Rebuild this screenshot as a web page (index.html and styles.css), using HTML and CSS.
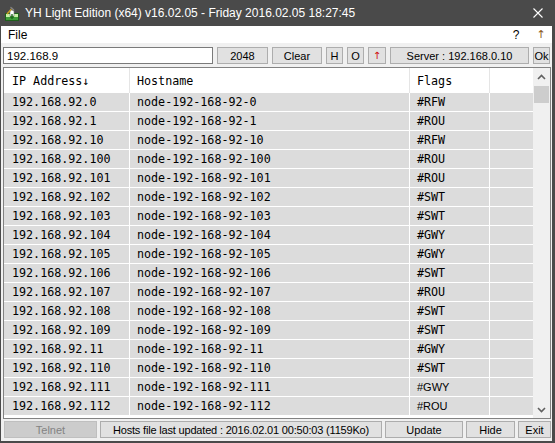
FILE: index.html
```html
<!DOCTYPE html>
<html>
<head>
<meta charset="utf-8">
<link rel="stylesheet" href="styles.css">
</head>
<body>
<div class="window">
  <div class="titlebar">
    <svg class="app-icon" viewBox="0 0 16 16" width="16" height="16">
      <rect x="1.5" y="8.5" width="13" height="7" fill="#3f9e3a" stroke="#1f5f1c"/>
      <rect x="2" y="9" width="12" height="3" fill="#c9f0a8"/>
      <rect x="6" y="5" width="4" height="6" fill="#ffffff" stroke="#7a7a7a" stroke-width="0.6"/>
      <path d="M8 9 V13 M6.3 11.5 L8 13.3 L9.7 11.5" stroke="#1d6b1a" stroke-width="1.3" fill="none"/>
      <path d="M3 9 L8.5 3" stroke="#c9a020" stroke-width="1.6"/>
      <path d="M7 1.5 L10.5 4.5 L9.3 5.8 L5.8 2.8 Z" fill="#8a8a8a" stroke="#444" stroke-width="0.5"/>
    </svg>
    <span class="title">YH Light Edition (x64) v16.02.05 - Friday 2016.02.05 18:27:45</span>
    <svg class="close" viewBox="0 0 10 10" width="10" height="10">
      <path d="M0.5 0.5 L9.5 9.5 M9.5 0.5 L0.5 9.5" stroke="#ffffff" stroke-width="1.1"/>
    </svg>
  </div>
  <div class="client">
    <div class="menubar">
      <span class="menu-item">File</span>
      <span class="spacer"></span>
      <span class="menu-icon">?</span>
      <span class="menu-icon arrow">↑</span>
    </div>
    <div class="toolbar">
      <input class="search" type="text" value="192.168.9">
      <div class="btn">2048</div>
      <div class="btn">Clear</div>
      <div class="btn">H</div>
      <div class="btn">O</div>
      <div class="btn red">↑</div>
      <div class="btn">Server : 192.168.0.10</div>
      <div class="btn">Ok</div>
    </div>
    <div class="list">
      <div class="table">
        <div class="row head">
          <div class="cell">IP Address↓</div>
          <div class="cell">Hostname</div>
          <div class="cell">Flags</div>
          <div class="cell last"></div>
        </div>
        <div class="row"><div class="cell">192.168.92.0</div><div class="cell">node-192-168-92-0</div><div class="cell">#RFW</div><div class="cell last"></div></div>
        <div class="row"><div class="cell">192.168.92.1</div><div class="cell">node-192-168-92-1</div><div class="cell">#ROU</div><div class="cell last"></div></div>
        <div class="row"><div class="cell">192.168.92.10</div><div class="cell">node-192-168-92-10</div><div class="cell">#RFW</div><div class="cell last"></div></div>
        <div class="row"><div class="cell">192.168.92.100</div><div class="cell">node-192-168-92-100</div><div class="cell">#ROU</div><div class="cell last"></div></div>
        <div class="row"><div class="cell">192.168.92.101</div><div class="cell">node-192-168-92-101</div><div class="cell">#ROU</div><div class="cell last"></div></div>
        <div class="row"><div class="cell">192.168.92.102</div><div class="cell">node-192-168-92-102</div><div class="cell">#SWT</div><div class="cell last"></div></div>
        <div class="row"><div class="cell">192.168.92.103</div><div class="cell">node-192-168-92-103</div><div class="cell">#SWT</div><div class="cell last"></div></div>
        <div class="row"><div class="cell">192.168.92.104</div><div class="cell">node-192-168-92-104</div><div class="cell">#GWY</div><div class="cell last"></div></div>
        <div class="row"><div class="cell">192.168.92.105</div><div class="cell">node-192-168-92-105</div><div class="cell">#GWY</div><div class="cell last"></div></div>
        <div class="row"><div class="cell">192.168.92.106</div><div class="cell">node-192-168-92-106</div><div class="cell">#SWT</div><div class="cell last"></div></div>
        <div class="row"><div class="cell">192.168.92.107</div><div class="cell">node-192-168-92-107</div><div class="cell">#ROU</div><div class="cell last"></div></div>
        <div class="row"><div class="cell">192.168.92.108</div><div class="cell">node-192-168-92-108</div><div class="cell">#SWT</div><div class="cell last"></div></div>
        <div class="row"><div class="cell">192.168.92.109</div><div class="cell">node-192-168-92-109</div><div class="cell">#SWT</div><div class="cell last"></div></div>
        <div class="row"><div class="cell">192.168.92.11</div><div class="cell">node-192-168-92-11</div><div class="cell">#GWY</div><div class="cell last"></div></div>
        <div class="row"><div class="cell">192.168.92.110</div><div class="cell">node-192-168-92-110</div><div class="cell">#SWT</div><div class="cell last"></div></div>
        <div class="row"><div class="cell">192.168.92.111</div><div class="cell">node-192-168-92-111</div><div class="cell sans">#GWY</div><div class="cell last"></div></div>
        <div class="row"><div class="cell">192.168.92.112</div><div class="cell">node-192-168-92-112</div><div class="cell sans">#ROU</div><div class="cell last"></div></div>
      </div>
      <div class="scrollbar">
        <div class="sb-btn">
          <svg viewBox="0 0 9 6" width="9" height="6"><path d="M1 5 L4.5 1.5 L8 5" stroke="#606060" stroke-width="1.6" fill="none"/></svg>
        </div>
        <div class="thumb"></div>
        <div class="sb-btn bottom">
          <svg viewBox="0 0 9 6" width="9" height="6"><path d="M1 1 L4.5 4.5 L8 1" stroke="#606060" stroke-width="1.6" fill="none"/></svg>
        </div>
      </div>
    </div>
    <div class="statusbar">
      <div class="btn disabled">Telnet</div>
      <div class="btn narrow">Hosts file last updated : 2016.02.01 00:50:03 (1159Ko)</div>
      <div class="btn">Update</div>
      <div class="btn">Hide</div>
      <div class="btn">Exit</div>
    </div>
  </div>
</div>
</body>
</html>
```
FILE: styles.css
```css
* { box-sizing: border-box; }
html, body { margin: 0; padding: 0; }
body {
  width: 555px;
  height: 443px;
  overflow: hidden;
  background: #4a4a4a;
  font-family: "Liberation Sans", Arial, sans-serif;
}
.window {
  width: 555px;
  height: 443px;
  display: flex;
  flex-direction: column;
}
.titlebar {
  height: 26px;
  flex: none;
  background: #4a4a4a;
  color: #ffffff;
  display: flex;
  align-items: center;
  padding-left: 4px;
  font-size: 12px;
}
.app-icon { flex: none; margin-right: 5px; margin-top: -1px; }
.title { flex: 1; white-space: nowrap; }
.close { flex: none; margin-right: 12px; }
.client {
  flex: 1;
  background: #f0f0f0;
  margin: 0 3px 2px 1px;
  display: flex;
  flex-direction: column;
}
.menubar {
  height: 17px;
  flex: none;
  background: #ffffff;
  display: flex;
  align-items: center;
  padding: 0 1px 0 7px;
  font-size: 12px;
  color: #000;
}
.spacer { flex: 1; }
.menu-icon { width: 20px; text-align: center; margin-left: 5px; }
.menu-icon.arrow { color: #8a5a20; font-family: "DejaVu Sans", sans-serif; font-size: 11px; }
.toolbar {
  margin-top: 4px;
  height: 17px;
  flex: none;
  padding-left: 2px;
  display: grid;
  grid-template-columns: 210px 51px 50px 17px 17px 18px 139px 17px;
  column-gap: 4px;
}
.search {
  margin: 0;
  height: 17px;
  border: 1px solid #7a7a7a;
  background: #fff;
  padding: 0 3px;
  font-family: "Liberation Sans", Arial, sans-serif;
  font-size: 11.5px;
  color: #000;
  outline: none;
}
.btn {
  background: #e1e1e1;
  border: 1px solid #adadad;
  display: flex;
  align-items: center;
  justify-content: center;
  font-size: 11px;
  color: #000;
  white-space: nowrap;
  overflow: hidden;
}
.btn.narrow { letter-spacing: -0.18px; }
.btn.red { color: #d01010; font-family: "DejaVu Sans", sans-serif; font-size: 10px; }
.btn.disabled { background: #cccccc; border-color: #bfbfbf; color: #838383; }
.list {
  margin: 3px 0 0 2px;
  width: 548px;
  height: 352px;
  flex: none;
  border: 1px solid #828282;
  background: #ffffff;
  display: flex;
}
.table { width: 529px; }
.row {
  display: grid;
  grid-template-columns: 126px 280px 80px 43px;
  height: 19px;
  background: #dcdcdc;
  border-bottom: 1px solid #ffffff;
  font-family: "DejaVu Sans Mono", monospace;
  font-size: 11.7px;
  color: #000;
}
.row.head { height: 25px; background: #ffffff; border-bottom: 0; }
.cell {
  border-right: 1px solid #ffffff;
  display: flex;
  align-items: center;
  padding-left: 7px;
  white-space: nowrap;
}
.cell:first-child { padding-left: 8px; }
.head .cell { border-right-color: #e5e5e5; }
.cell.last { border-right: 0; }
.cell.sans { font-family: "Liberation Sans", Arial, sans-serif; font-size: 11px; }
.scrollbar {
  width: 17px;
  background: #f0f0f0;
  display: flex;
  flex-direction: column;
}
.sb-btn {
  height: 17px;
  flex: none;
  display: flex;
  align-items: center;
  justify-content: center;
}
.sb-btn.bottom { margin-top: auto; }
.thumb {
  height: 17px;
  margin: 1px 1px 0 1px;
  background: #cdcdcd;
}
.statusbar {
  margin-top: 2px;
  height: 17px;
  flex: none;
  padding-left: 3px;
  display: grid;
  grid-template-columns: 93px 282px 78px 49px 33px;
  column-gap: 3px;
}
```
